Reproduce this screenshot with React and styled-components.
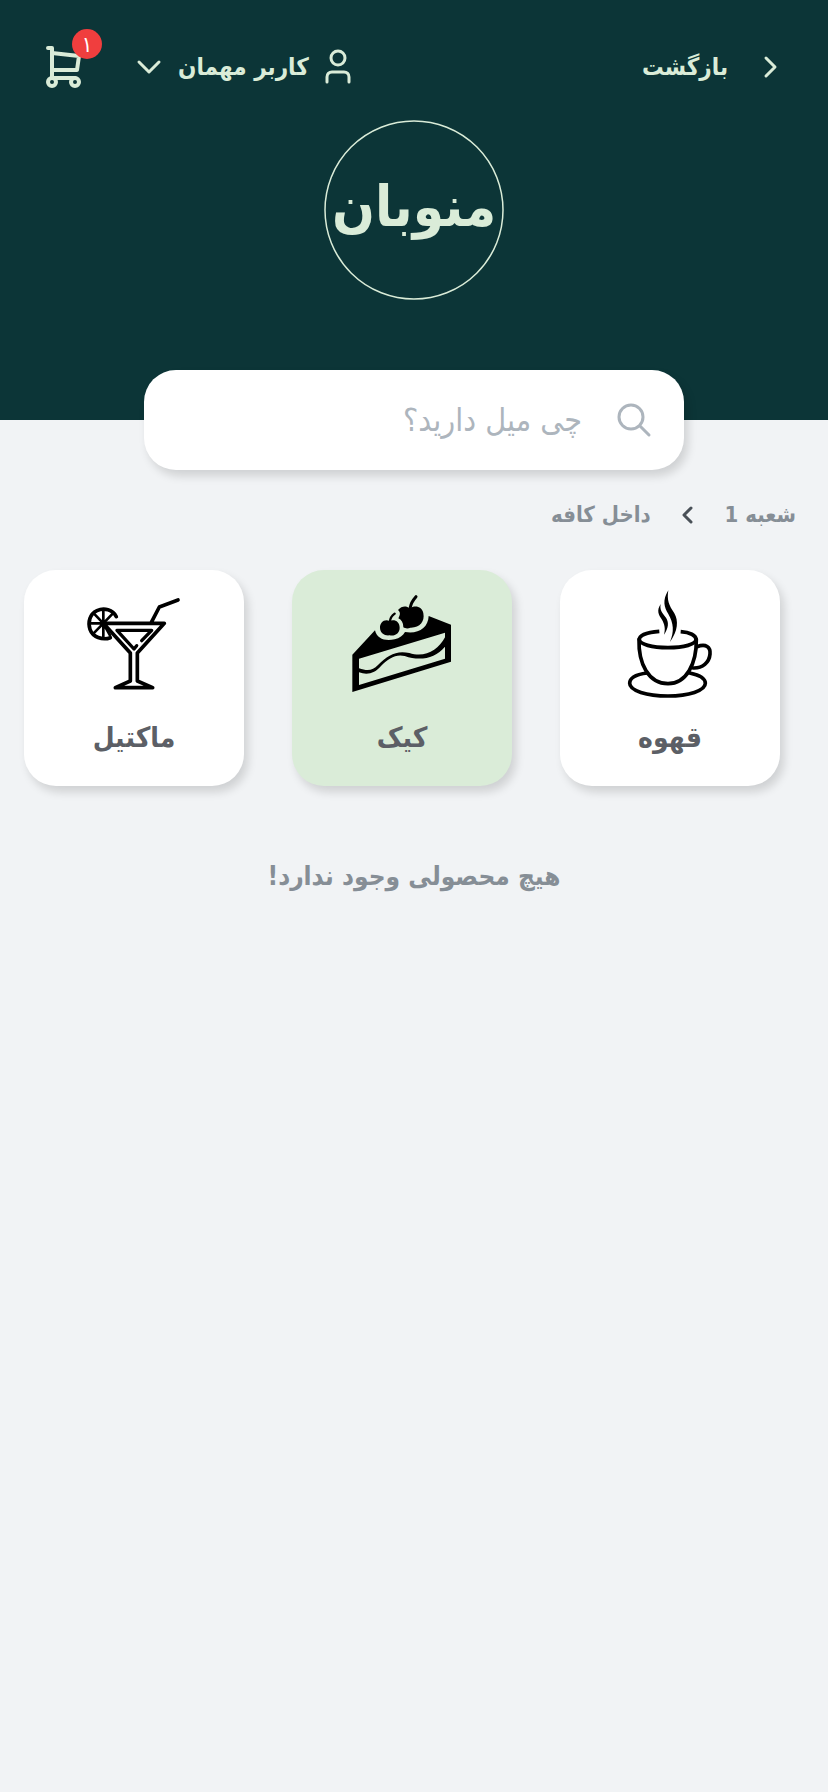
import React from 'react'
import styled, { createGlobalStyle } from 'styled-components'


const GlobalStyle = createGlobalStyle`
    * {
        box-sizing: border-box;
    }
    body {
        margin: 0;
        background-color: #f1f3f5;
        font-family: "DejaVu Sans Condensed", "DejaVu Sans", sans-serif;
    }
    button, input {
        font-family: inherit;
    }
`;
const Page = styled.div`
    min-height: 100vh;
`;
const Header = styled.header`
    display: flex;
    flex-direction: column;
    align-items: center;
    background-color: #0c3537;
`;
const TopBar = styled.div`
    width: 100%;
    height: 120px;
    display: flex;
    justify-content: space-between;
    align-items: center;
    padding: 14px 44px 0;
`;
const Actions = styled.div`
    display: flex;
    align-items: center;
    gap: 54px;
`;
const HeaderButton = styled.button`
    display: flex;
    align-items: center;
    gap: ${props => props.$gap};
    padding: 0;
    color: #daecd8;
    background: none;
    border: none;
    font-size: 24px;
    font-weight: bold;
    white-space: nowrap;
    cursor: pointer;
`;
const CartButton = styled.button`
    position: relative;
    display: flex;
    padding: 0;
    color: #daecd8;
    background: none;
    border: none;
    cursor: pointer;
`;
const Badge = styled.span`
    position: absolute;
    top: -16px;
    right: -20px;
    width: 30px;
    height: 30px;
    display: flex;
    justify-content: center;
    align-items: center;
    color: white;
    background-color: #f03e3e;
    border-radius: 50%;
    font-size: 22px;
`;
const Logo = styled.svg`
    display: block;
    width: 180px;
    height: 180px;
`;
const LogoText = styled.text`
    font-size: 56px;
    font-weight: bold;
    text-anchor: middle;
    direction: rtl;
`;
const Search = styled.label`
    width: 540px;
    max-width: calc(100% - 48px);
    height: 100px;
    display: flex;
    align-items: center;
    gap: 34px;
    margin-top: 70px;
    margin-bottom: -50px;
    padding: 0 32px;
    color: #adb5bd;
    background-color: white;
    border-radius: 32px;
    box-shadow: 4px 6px 10px rgba(0, 0, 0, 0.14);
`;
const SearchInput = styled.input`
    flex: 1;
    min-width: 0;
    padding: 0;
    color: #495057;
    background: none;
    border: none;
    outline: none;
    font-size: 32px;

    &::placeholder {
        color: #adb5bd;
        opacity: 1;
    }
`;
const Breadcrumb = styled.nav`
    display: flex;
    align-items: center;
    gap: 28px;
    padding: 80px 32px 0;
    color: #495057;
`;
const Crumb = styled.a`
    color: #868e96;
    font-size: 22px;
    font-weight: bold;
    line-height: 30px;
    text-decoration: none;
`;
const Categories = styled.div`
    display: grid;
    grid-template-columns: repeat(3, 1fr);
    gap: 48px;
    padding: 40px 48px 0 24px;
`;
const Category = styled.button`
    display: flex;
    flex-direction: column;
    align-items: center;
    gap: 12px;
    height: 216px;
    padding: 12px 0 0;
    color: #5c5f66;
    background-color: ${props => props.$active ? '#daecd8' : 'white'};
    border: none;
    border-radius: 32px;
    box-shadow: 4px 6px 10px rgba(0, 0, 0, 0.14);
    font-size: 28px;
    font-weight: bold;
    line-height: 48px;
    cursor: pointer;
`;
const CategoryIcon = styled.svg`
    width: 120px;
    height: 120px;
    color: black;
    fill: none;
    stroke: currentColor;
    stroke-width: 11;
    stroke-linecap: round;
    stroke-linejoin: round;
`;
const Empty = styled.p`
    margin: 70px 24px 0;
    color: #868e96;
    font-size: 26px;
    font-weight: bold;
    line-height: 40px;
    text-align: center;
`;
const LineIcon = styled.svg`
    flex-shrink: 0;
    fill: none;
    stroke: currentColor;
    stroke-width: ${props => props.$stroke || 3};
    stroke-linecap: round;
    stroke-linejoin: round;
`;

function CoffeeIcon() {
  return (
    <CategoryIcon viewBox="180 66 360 360">
        <path strokeLinecap="butt" d="M328 214C290 217 268 226 268 238C268 253 306 263 354 263C402 263 438 253 438 238C438 226 420 217 392 215" />
        <path d="M267 238C265 310 295 371 354 371C410 371 440 310 439 238" />
        <path d="M441 260C468 250 482 261 480 282C478 308 457 325 430 324" />
        <path d="M291 339C260 343 239 354 239 370C239 392 290 408 354 408C416 408 466 392 466 370C466 355 448 345 419 339" />
        <path fill="currentColor" stroke="none" d="M355 91C336 121 343 143 355 162C371 190 373 214 360 246C384 212 386 183 373 160C357 136 350 120 355 91Z" />
        <path fill="currentColor" stroke="none" d="M332 132C319 152 326 164 335 178C344 193 347 207 342 224C356 203 357 187 348 173C335 156 329 150 332 132Z" />
    </CategoryIcon>
  )
}

function CakeIcon() {
  return (
    <CategoryIcon viewBox="186 66 360 360">
        <path fill="currentColor" stroke="none" fillRule="evenodd" d="M217 284L285 211C290 236 316 245 344 238C359 234 369 227 375 216C415 223 445 203 446 168L513 194V305L217 396ZM237 296V325C263 334 278 332 294 315C323 285 350 270 388 279C435 294 474 271 495 232V218ZM237 337V375L495 296V260C465 296 420 304 374 288C348 281 325 295 303 318C285 340 262 346 237 337Z" />
        <path fill="currentColor" stroke="none" d="M329 183C314 175 299 187 300 204C301 220 314 228 329 226C346 229 359 219 359 203C359 185 344 177 329 183Z" />
        <path strokeWidth="7" d="M330 184C331 173 337 166 344 161" />
        <path fill="currentColor" stroke="none" d="M354 150C365 137 378 137 389 144C407 134 427 140 430 160C435 185 419 204 391 203C383 207 375 205 370 202C370 188 364 179 355 175C360 165 363 158 354 150Z" />
        <path strokeWidth="9" d="M391 142C393 128 400 119 408 110" />
    </CategoryIcon>
  )
}

function CocktailIcon() {
  return (
    <CategoryIcon viewBox="192 66 360 360">
        <path d="M319 170C309 149 282 142 261 152C239 162 233 187 240 208C248 231 277 242 301 233" />
        <path strokeWidth="8" d="M240 190H280M280 148V235M252 161L280 190L308 161M280 190L250 221M280 190L300 226" />
        <path d="M280 190H463L382 279V363L428 383H316L361 363V279L280 190M424 187L448 141L504 120" />
        <path strokeWidth="10" d="M380 257L372 267L321 211H425L395 242" />
    </CategoryIcon>
  )
}

const categories = [
  { name: 'قهوه', icon: <CoffeeIcon /> },
  { name: 'کیک', icon: <CakeIcon />, active: true },
  { name: 'ماکتیل', icon: <CocktailIcon /> },
]

function App() {
  return (
    <Page dir="rtl" lang="fa">
        <GlobalStyle />
        <Header>
            <TopBar>
                <HeaderButton type="button" $gap="28px">
                    <LineIcon width="28" height="28" viewBox="0 0 28 28">
                        <path d="M10 5L19 14L10 23" />
                    </LineIcon>
                    بازگشت
                </HeaderButton>
                <Actions>
                    <HeaderButton type="button" $gap="16px">
                        <LineIcon width="26" height="36" viewBox="0 0 26 36">
                            <circle cx="13" cy="9" r="7" />
                            <path d="M2 33V28C2 25 4 23 7 23H19C22 23 24 25 24 28V33" />
                        </LineIcon>
                        کاربر مهمان
                        <LineIcon width="26" height="26" viewBox="0 0 26 26">
                            <path d="M3 8L13 18L23 8" />
                        </LineIcon>
                    </HeaderButton>
                    <CartButton type="button" aria-label="سبد خرید">
                        <LineIcon width="38" height="44" viewBox="0 0 38 44" $stroke={4}>
                            <path d="M4 3H8V33H31M8 8L35 11L33 25H8" />
                            <circle cx="8" cy="37" r="4" />
                            <circle cx="31" cy="37" r="4" />
                        </LineIcon>
                        <Badge>۱</Badge>
                    </CartButton>
                </Actions>
            </TopBar>
            <Logo viewBox="0 0 180 180" fill="#daecd8">
                <circle cx="90" cy="90" r="89" fill="none" stroke="#daecd8" strokeWidth="1.5" />
                <LogoText x="90" y="106">منوبان</LogoText>
            </Logo>
            <Search>
                <LineIcon width="36" height="36" viewBox="0 0 36 36">
                    <circle cx="15" cy="15" r="12" />
                    <path d="M24 24L33 33" />
                </LineIcon>
                <SearchInput type="text" placeholder="چی میل دارید؟" />
            </Search>
        </Header>
        <Breadcrumb>
            <Crumb href="#">شعبه 1</Crumb>
            <LineIcon width="18" height="20" viewBox="0 0 18 20">
                <path d="M12 3L5 10L12 17" />
            </LineIcon>
            <Crumb href="#">داخل کافه</Crumb>
        </Breadcrumb>
        <Categories>
            {categories.map(item => (
                <Category key={item.name} type="button" $active={item.active}>
                    {item.icon}
                    {item.name}
                </Category>
            ))}
        </Categories>
        <Empty>هیچ محصولی وجود ندارد!</Empty>
    </Page>
  )
}

export default App
